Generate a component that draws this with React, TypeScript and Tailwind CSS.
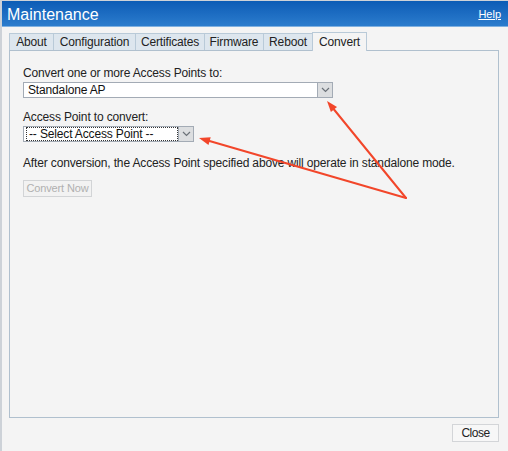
import React from "react";

const font = { fontFamily: '"Liberation Sans", Arial, sans-serif' };

function Chevron() {
  return (
    <svg width="9" height="6" viewBox="0 0 9 6">
      <path d="M1 1 L4.5 4.5 L8 1" fill="none" stroke="#6b7178" strokeWidth="1.2" />
    </svg>
  );
}

function Select({ width, text, focus }: { width: number; text: string; focus?: boolean }) {
  return (
    <div className="flex h-[16px] border border-[#a3abb5] bg-white" style={{ width }}>
      <div className="flex-1 flex items-center pl-[2px] min-w-0">
        <div
          className={
            focus
              ? "flex items-center h-[14px] w-full border border-dotted border-[#333] pl-[2px] text-[12px] leading-[12px] text-[#111]"
              : "flex items-center h-[14px] w-full pl-[2px] text-[12px] leading-[12px] text-[#111]"
          }
        >
          {text}
        </div>
      </div>
      <div className="w-[15px] h-full flex items-center justify-center bg-[#dcdee0] border-l border-[#a3abb5]">
        <Chevron />
      </div>
    </div>
  );
}

const tabs = [
  { label: "About", w: 44 },
  { label: "Configuration", w: 82 },
  { label: "Certificates", w: 69 },
  { label: "Firmware", w: 59 },
  { label: "Reboot", w: 49 },
];

export default function App() {
  return (
    <div
      className="relative w-[508px] h-[451px] bg-[#f4f4f4] border-l-2 border-t border-[#cdd2d8] flex flex-col overflow-hidden tracking-[-0.15px]"
      style={font}
    >
      {/* title bar */}
      <div className="h-[26px] flex items-center justify-between pl-[5px] pr-[7px] bg-gradient-to-b from-[#0b5cb6] to-[#2b7ccd] border-b border-[#7fb0e0]">
        <span className="text-white text-[16px] leading-[16px] mt-[2px] tracking-normal">Maintenance</span>
        <span className="text-white text-[11px] underline mt-[1px] tracking-normal">Help</span>
      </div>

      {/* body */}
      <div className="flex-1 flex flex-col pl-[7px] pr-[9px] pt-[5px]">
        {/* tabs */}
        <div className="flex items-end h-[18px] relative z-10">
          {tabs.map((t) => (
            <div
              key={t.label}
              className="h-[17px] flex items-center justify-center border border-r-0 border-b-0 border-[#b9cad8] bg-[#dde6ee] text-[12px] text-[#222]"
              style={{ width: t.w }}
            >
              {t.label}
            </div>
          ))}
          <div className="h-[19px] w-[55px] flex items-center justify-center border border-b-0 border-[#b9cad8] bg-[#f4f4f4] text-[12px] text-[#222] -mb-[1px] pb-[1px]">
            Convert
          </div>
        </div>

        {/* panel */}
        <div className="h-[368px] border border-[#b0c0ce] bg-[#f4f4f4] pl-[13px] pt-[15px] text-[12px] text-[#222]">
          <div className="h-[14px] leading-[14px]">Convert one or more Access Points to:</div>
          <div className="mt-[2px]">
            <Select width={310} text="Standalone AP" />
          </div>
          <div className="mt-[12px] h-[14px] leading-[14px]">Access Point to convert:</div>
          <div className="mt-[2px]">
            <Select width={171} text="-- Select Access Point --" focus />
          </div>
          <div className="mt-[14px] h-[14px] leading-[14px]">
            After conversion, the Access Point specified above will operate in standalone mode.
          </div>
          <div className="mt-[10px] w-[69px] h-[17px] border border-[#d2d4d6] bg-[#f2f2f2] flex items-center justify-center text-[11px] text-[#b0b0b0]">
            Convert Now
          </div>
        </div>

        {/* footer */}
        <div className="flex justify-end mt-[6px]">
          <div className="w-[47px] h-[18px] border border-[#d3d5d8] bg-[#f7f7f7] flex items-center justify-center text-[12px] text-[#222] tracking-[-0.5px]">
            Close
          </div>
        </div>
      </div>

      {/* red arrows overlay */}
      <svg className="absolute left-0 top-0 pointer-events-none" width="508" height="451" viewBox="0 0 508 451">
        <line x1="404" y1="197" x2="332" y2="108.5" stroke="#f2462a" strokeWidth="2" strokeLinecap="round" />
        <polygon points="325,100 335,106 328.9,111.1" fill="#f2462a" />
        <line x1="404" y1="197" x2="207.5" y2="140" stroke="#f2462a" strokeWidth="2" strokeLinecap="round" />
        <polygon points="197,137 208.7,136.2 206.5,143.9" fill="#f2462a" />
      </svg>
    </div>
  );
}
